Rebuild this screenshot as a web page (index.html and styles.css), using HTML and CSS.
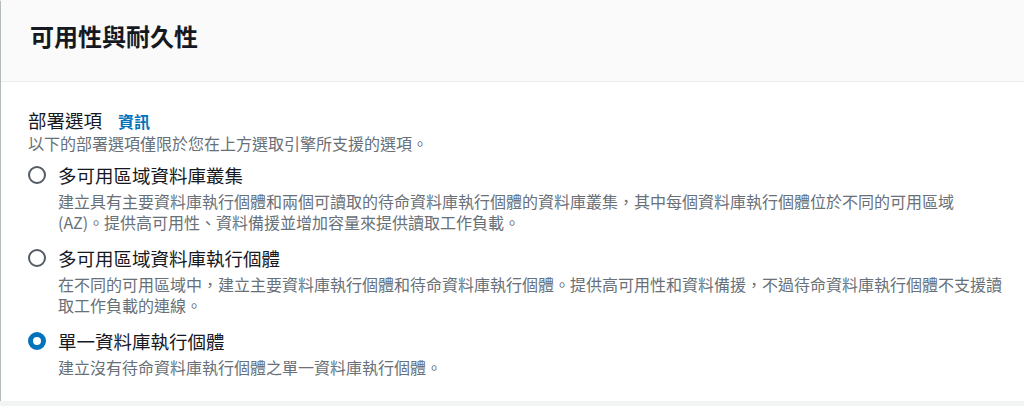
FILE: index.html
```html
<!DOCTYPE html>
<html lang="zh-Hant">
<head>
    <meta charset="UTF-8">
    <meta name="viewport" content="width=device-width, initial-scale=1.0">
    <title>可用性與耐久性</title>
    <link rel="stylesheet" href="styles.css">
</head>
<body>
    <div class="card">
        <div class="card-header">
            <h2>可用性與耐久性</h2>
        </div>
        <div class="card-body">
            <div class="field-label">
                <span>部署選項</span>
                <a href="#" class="info-link">資訊</a>
            </div>
            <p class="field-desc">以下的部署選項僅限於您在上方選取引擎所支援的選項。</p>

            <div class="options">
                <label class="option">
                    <input type="radio" name="deployment" value="cluster">
                    <span class="option-text">
                        <span class="option-title">多可用區域資料庫叢集</span>
                        <span class="option-desc">建立具有主要資料庫執行個體和兩個可讀取的待命資料庫執行個體的資料庫叢集，其中每個資料庫執行個體位於不同的可用區域<br>(AZ)。提供高可用性、資料備援並增加容量來提供讀取工作負載。</span>
                    </span>
                </label>

                <label class="option">
                    <input type="radio" name="deployment" value="multi-az">
                    <span class="option-text">
                        <span class="option-title">多可用區域資料庫執行個體</span>
                        <span class="option-desc">在不同的可用區域中，建立主要資料庫執行個體和待命資料庫執行個體。提供高可用性和資料備援，不過待命資料庫執行個體不支援讀取工作負載的連線。</span>
                    </span>
                </label>

                <label class="option">
                    <input type="radio" name="deployment" value="single" checked>
                    <span class="option-text">
                        <span class="option-title">單一資料庫執行個體</span>
                        <span class="option-desc">建立沒有待命資料庫執行個體之單一資料庫執行個體。</span>
                    </span>
                </label>
            </div>
        </div>
    </div>
</body>
</html>
```

FILE: styles.css
```css
body {
    margin: 0;
    padding-left: 1px;
    background-color: #f2f3f3;
    font-family: "Noto Sans CJK TC", "Noto Sans", sans-serif;
    color: #16191f;
    overflow: hidden;
}

.card {
    margin-right: -10px;
    height: 401px;
    background: #fff;
    box-shadow: 0 1px 1px 0 rgba(0, 28, 36, 0.4), -1px 1px 1px 0 rgba(0, 28, 36, 0.2);
}

.card-header {
    background: #fafafa;
    border-bottom: 1px solid #eaeded;
    padding: 22px 29px 31px;
}

.card-header h2 {
    margin: 0;
    font-size: 24px;
    line-height: 28px;
    font-weight: 700;
}

.card-body {
    padding: 27px 27px 0;
}

.field-label {
    display: flex;
    align-items: baseline;
    gap: 16px;
    font-size: 18.5px;
    line-height: 22px;
}

.info-link {
    color: #0073bb;
    font-size: 16px;
    font-weight: 700;
    text-decoration: none;
}

.field-desc {
    margin: 1px 0 0;
    font-size: 16px;
    line-height: 21px;
    color: #687078;
}

.options {
    display: flex;
    flex-direction: column;
    gap: 14px;
    margin-top: 10px;
}

.option {
    display: flex;
    align-items: flex-start;
    gap: 12px;
    cursor: pointer;
}

.option input[type="radio"] {
    appearance: none;
    flex: none;
    width: 18px;
    height: 18px;
    margin: 2px 0 0;
    border: 2px solid #545b64;
    border-radius: 50%;
    background: #fff;
}

.option input[type="radio"]:checked {
    border: 5px solid #0073bb;
}

.option-text {
    display: flex;
    flex-direction: column;
    gap: 5px;
}

.option-title {
    font-size: 18.5px;
    line-height: 22px;
}

.option-desc {
    max-width: 946px;
    font-size: 16px;
    line-height: 21px;
    color: #687078;
}
```
